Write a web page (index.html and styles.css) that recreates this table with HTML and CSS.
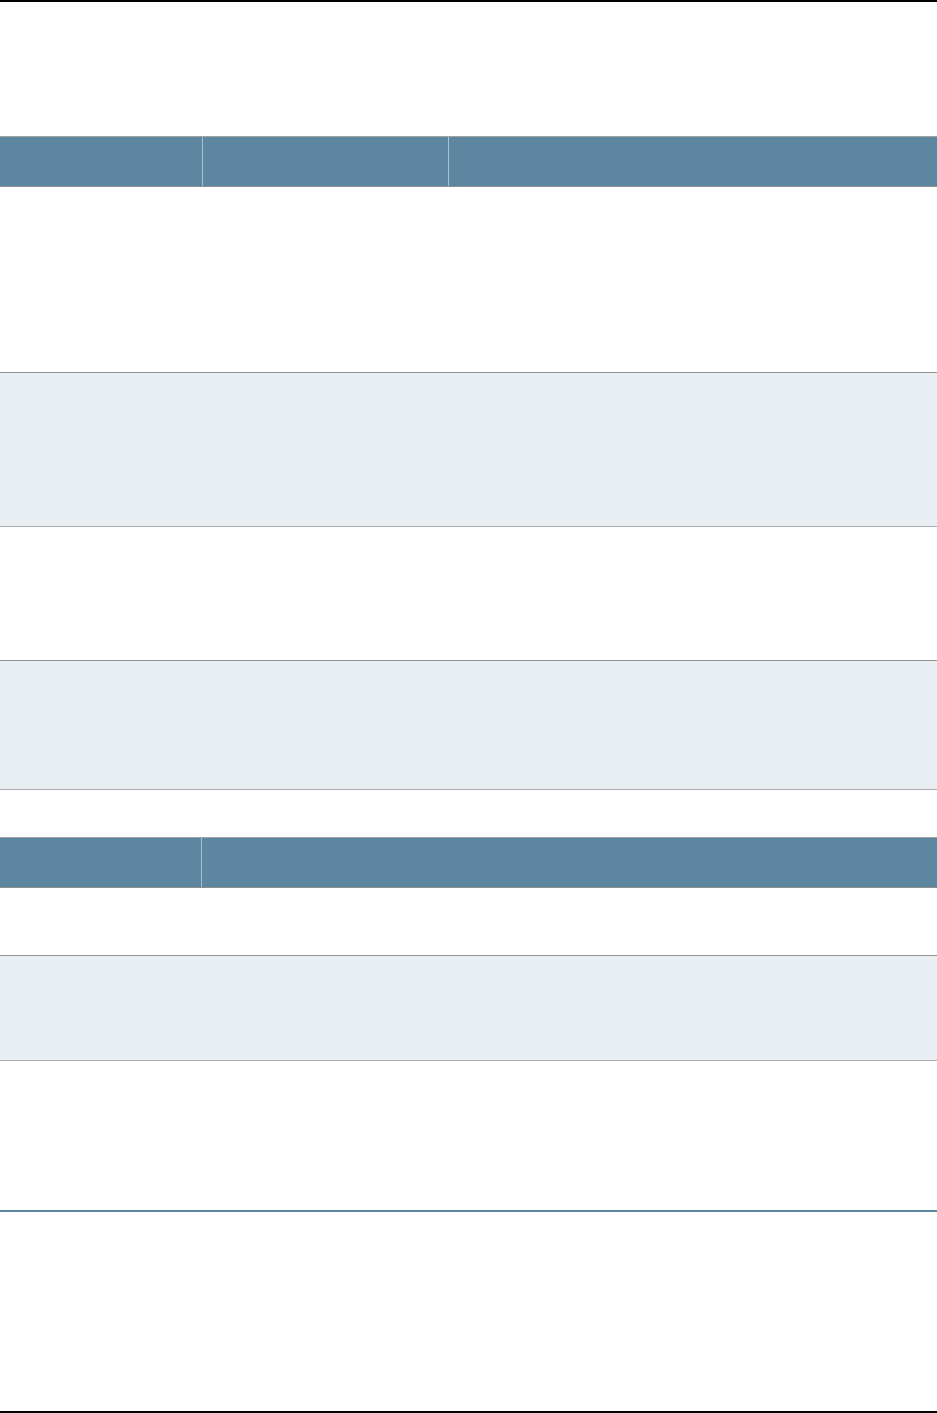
FILE: index.html
```html
<!DOCTYPE html>
<html lang="en">
<head>
<meta charset="utf-8">
<title>Tables</title>
<link rel="stylesheet" href="styles.css">
</head>
<body>
<div class="page">
  <div class="top-rule"></div>
  <div class="spacer-top"></div>

  <section class="table">
    <div class="thead thead-3">
      <div class="th"></div>
      <div class="th"></div>
      <div class="th"></div>
    </div>
    <div class="row h185"></div>
    <div class="row alt h153"></div>
    <div class="row h133"></div>
    <div class="row alt h128"></div>
  </section>

  <div class="spacer-mid"></div>

  <section class="table">
    <div class="thead thead-2">
      <div class="th"></div>
      <div class="th"></div>
    </div>
    <div class="row h67"></div>
    <div class="row alt h104"></div>
    <div class="row last h149"></div>
  </section>

  <div class="fill"></div>
  <div class="bottom-rule"></div>
</div>
</body>
</html>
```

FILE: styles.css
```css
html, body {
  margin: 0;
  padding: 0;
  background: #ffffff;
  font-family: "Liberation Sans", Arial, sans-serif;
}

.page {
  width: 937px;
  height: 1413px;
  display: flex;
  flex-direction: column;
}

.top-rule {
  height: 2px;
  background: #000000;
  flex: none;
}

.spacer-top {
  height: 134px;
  flex: none;
}

.spacer-mid {
  height: 47px;
  flex: none;
}

.table {
  display: flex;
  flex-direction: column;
  flex: none;
}

.thead {
  display: grid;
  height: 49px;
  border-top: 1px solid #a3a3a3;
  border-bottom: 1px solid #8e8e8e;
  background: #5d87a0;
}

.thead-3 {
  grid-template-columns: 202px 246px 1fr;
}

.thead-2 {
  grid-template-columns: 201px 1fr;
}

.th {
  border-left: 1px solid #a8c0cf;
}

.th:first-child {
  border-left: none;
}

.row {
  background: #ffffff;
  border-bottom: 1px solid #949494;
}

.row.alt {
  background: #e9eef3;
  border-bottom-color: #a9adb1;
}

.row.last {
  border-bottom: 2px solid #5d87a0;
}

.h185 { height: 185px; }
.h153 { height: 153px; }
.h133 { height: 133px; }
.h128 { height: 128px; }
.h67 { height: 67px; }
.h104 { height: 104px; }
.h149 { height: 149px; }

.fill {
  flex: 1;
}

.bottom-rule {
  height: 2px;
  background: #000000;
  flex: none;
}
```
